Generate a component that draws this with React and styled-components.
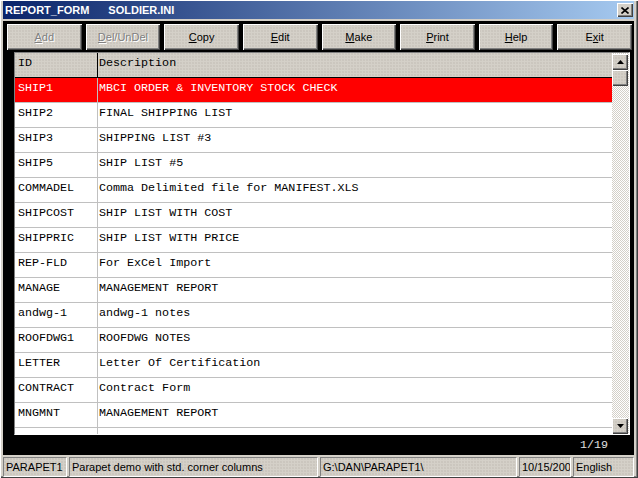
import React from "react";
import styled, { createGlobalStyle, css } from "styled-components";

const Global = createGlobalStyle`
  html, body { margin: 0; padding: 0; background: #d4d0c8; }
  body { width: 638px; height: 478px; overflow: hidden; }
  * { box-sizing: border-box; }
`;

const texture = css`
  background-color: #d4d0c8;
  background-image: radial-gradient(circle at 1px 1px, #c6c2ba 0.6px, transparent 0.9px);
  background-size: 3px 3px;
`;

const Window = styled.div`
  width: 638px;
  height: 478px;
  display: flex;
  flex-direction: column;
  padding: 1px 4px 1px 3px;
  background: #d4d0c8;
  box-shadow: inset 1px 1px #ffffff, inset -1px -1px #404040, inset -2px -2px #808080;
`;

const TitleBar = styled.div`
  height: 18px;
  flex: none;
  display: flex;
  align-items: center;
  padding: 0 1px 0 2px;
  background: linear-gradient(to right, #0a246a, #a6caf0);
  font-family: "Liberation Sans", Arial, sans-serif;
  font-weight: bold;
  font-size: 11px;
  color: #ffffff;
`;

const TitlePart = styled.span`
  margin-right: ${(p) => p.$gap || 0}px;
  white-space: pre;
`;

const CloseBtn = styled.div`
  margin-left: auto;
  width: 16px;
  height: 14px;
  display: flex;
  align-items: center;
  justify-content: center;
  background: #d4d0c8;
  box-shadow: inset 1px 1px #ffffff, inset -1px -1px #404040, inset -2px -2px #808080;
`;

const Main = styled.div`
  margin-top: 2px;
  height: 434px;
  flex: none;
  background: #000000;
  display: flex;
  flex-direction: column;
  padding-top: 3px;
`;

const Toolbar = styled.div`
  height: 26px;
  display: flex;
  gap: 4px;
  padding: 0 2px 0 4px;
`;

const Button = styled.div`
  flex: 1;
  ${texture};
  box-shadow: inset 1px 1px #ffffff, inset -1px -1px #404040, inset -2px -2px #808080;
  display: flex;
  align-items: center;
  justify-content: center;
  font-family: "Liberation Sans", Arial, sans-serif;
  font-size: 11px;
  color: ${(p) => (p.$disabled ? "#808080" : "#000000")};
  text-shadow: ${(p) => (p.$disabled ? "1px 1px #ffffff" : "none")};
  u { text-decoration: underline; text-underline-offset: 1px; }
`;

const GridFrame = styled.div`
  margin: 2px 4px 0 11px;
  height: 383px;
  border: 1px solid;
  border-color: #808080 #ffffff #ffffff #808080;
  display: flex;
  background: #ffffff;
`;

const Table = styled.div`
  flex: 1;
  overflow: hidden;
  font-family: "Liberation Mono", "Courier New", monospace;
  font-size: 11.7px;
  line-height: 14px;
`;

const Row = styled.div`
  display: grid;
  grid-template-columns: 83px 1fr;
  height: 25px;
  border-bottom: 1px solid ${(p) => (p.$header ? "#000000" : "#c0c0c0")};
  ${(p) => p.$header && texture};
  background-color: ${(p) => (p.$selected ? "#ff0000" : p.$header ? "#d4d0c8" : "#ffffff")};
  color: ${(p) => (p.$selected ? "#ffffff" : "#000000")};
`;

const Cell = styled.div`
  padding: 3px 0 0 ${(p) => (p.$first ? "3px" : "1px")};
  white-space: pre;
  overflow: hidden;
  border-right: ${(p) => (p.$first ? `1px solid ${p.$header ? "#000000" : "#c0c0c0"}` : "none")};
`;

const Scrollbar = styled.div`
  width: 17px;
  flex: none;
  display: flex;
  flex-direction: column;
  padding: 1px 1px 0 0;
  background-color: #ffffff;
  background-image: repeating-conic-gradient(#d4d0c8 0 25%, #ffffff 0 50%);
  background-size: 2px 2px;
`;

const ScrollBtn = styled.div`
  width: 16px;
  height: ${(p) => p.$h || 16}px;
  flex: none;
  ${texture};
  box-shadow: inset 1px 1px #ffffff, inset -1px -1px #404040, inset -2px -2px #808080;
  display: flex;
  align-items: center;
  justify-content: center;
  margin-top: ${(p) => (p.$bottom ? "auto" : "0")};
`;

const Counter = styled.div`
  height: 20px;
  display: flex;
  align-items: center;
  justify-content: flex-end;
  padding-right: 26px;
  font-family: "Liberation Mono", "Courier New", monospace;
  font-size: 11.7px;
  color: #e0e0e0;
`;

const StatusBar = styled.div`
  margin-top: 2px;
  height: 20px;
  display: flex;
  gap: 2px;
`;

const Panel = styled.div`
  width: ${(p) => p.$w}px;
  flex: none;
  ${texture};
  border: 1px solid;
  border-color: #808080 #ffffff #ffffff #808080;
  display: flex;
  align-items: center;
  padding-left: 2px;
  overflow: hidden;
  white-space: nowrap;
  font-family: "Liberation Sans", Arial, sans-serif;
  font-size: 11px;
  color: #000000;
  ${(p) => p.$grow && "flex: 1;"}
`;

const rows = [
  ["SHIP1", "MBCI ORDER & INVENTORY STOCK CHECK"],
  ["SHIP2", "FINAL SHIPPING LIST"],
  ["SHIP3", "SHIPPING LIST #3"],
  ["SHIP5", "SHIP LIST #5"],
  ["COMMADEL", "Comma Delimited file for MANIFEST.XLS"],
  ["SHIPCOST", "SHIP LIST WITH COST"],
  ["SHIPPRIC", "SHIP LIST WITH PRICE"],
  ["REP-FLD", "For ExCel Import"],
  ["MANAGE", "MANAGEMENT REPORT"],
  ["andwg-1", "andwg-1 notes"],
  ["ROOFDWG1", "ROOFDWG NOTES"],
  ["LETTER", "Letter Of Certification"],
  ["CONTRACT", "Contract Form"],
  ["MNGMNT", "MANAGEMENT REPORT"],
  ["REPORT", "PRICE"],
];

const buttons = [
  { pre: "", u: "A", post: "dd", disabled: true },
  { pre: "", u: "D", post: "el/UnDel", disabled: true },
  { pre: "", u: "C", post: "opy" },
  { pre: "", u: "E", post: "dit" },
  { pre: "", u: "M", post: "ake" },
  { pre: "", u: "P", post: "rint" },
  { pre: "", u: "H", post: "elp" },
  { pre: "E", u: "x", post: "it" },
];

const Arrow = ({ down }) => (
  <svg width="7" height="4" viewBox="0 0 7 4">
    <path d={down ? "M0 0H7L3.5 4Z" : "M3.5 0L7 4H0Z"} fill="#000" />
  </svg>
);

export default function App() {
  return (
    <>
      <Global />
      <Window>
        <TitleBar>
          <TitlePart $gap={19}>REPORT_FORM</TitlePart>
          <TitlePart>SOLDIER.INI</TitlePart>
          <CloseBtn>
            <svg width="8" height="7" viewBox="0 0 8 7">
              <path d="M0.5 0.5L7.5 6.5M7.5 0.5L0.5 6.5" stroke="#000" strokeWidth="1.6" />
            </svg>
          </CloseBtn>
        </TitleBar>
        <Main>
          <Toolbar>
            {buttons.map((b, i) => (
              <Button key={i} $disabled={b.disabled}>
                {b.pre}
                <u>{b.u}</u>
                {b.post}
              </Button>
            ))}
          </Toolbar>
          <GridFrame>
            <Table>
              <Row $header>
                <Cell $header $first>ID</Cell>
                <Cell $header>Description</Cell>
              </Row>
              {rows.map(([id, desc], i) => (
                <Row key={i} $selected={i === 0}>
                  <Cell $first>{id}</Cell>
                  <Cell>{desc}</Cell>
                </Row>
              ))}
            </Table>
            <Scrollbar>
              <ScrollBtn>
                <Arrow />
              </ScrollBtn>
              <ScrollBtn />
              <ScrollBtn $bottom>
                <Arrow down />
              </ScrollBtn>
            </Scrollbar>
          </GridFrame>
          <Counter>1/19</Counter>
        </Main>
        <StatusBar>
          <Panel $w={64}>PARAPET1</Panel>
          <Panel $w={249}>Parapet demo with std. corner columns</Panel>
          <Panel $w={197}>G:\DAN\PARAPET1\</Panel>
          <Panel $w={52}>10/15/2002</Panel>
          <Panel $grow>English</Panel>
        </StatusBar>
      </Window>
    </>
  );
}
